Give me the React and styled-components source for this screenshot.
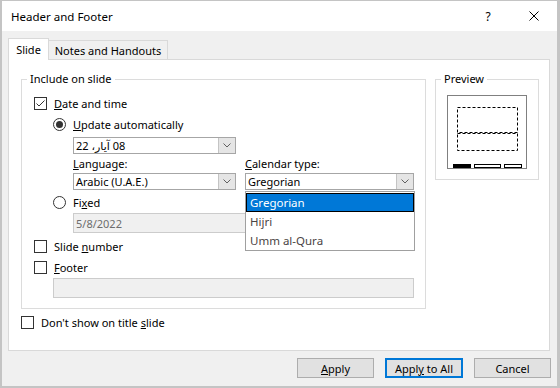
import React from "react";
import styled, { createGlobalStyle } from "styled-components";

const GlobalStyle = createGlobalStyle`
  html, body {
    margin: 0;
    padding: 0;
    background: #fff;
  }
  body {
    font-family: "Noto Sans", "DejaVu Sans", sans-serif;
    font-size: 11px;
    color: #000;
  }
`;

const Window = styled.div`
  width: 560px;
  height: 388px;
  box-sizing: border-box;
  border-style: solid;
  border-color: #c4c4c4;
  border-width: 1px 3px 2px 2px;
  display: flex;
  flex-direction: column;
  background: #f0f0f0;
`;

const TitleBar = styled.div`
  height: 30px;
  flex: none;
  background: #fff;
  display: flex;
  align-items: center;
  padding-left: 9px;
  font-size: 11.5px;
`;

const Title = styled.div`
  flex: 1;
`;

const TitleButton = styled.div`
  width: 46px;
  height: 30px;
  display: flex;
  align-items: center;
  justify-content: center;
  font-size: 12px;
`;

const Body = styled.div`
  flex: 1;
  display: flex;
  flex-direction: column;
  padding: 7px 7px 8px 6px;
`;

const TabRow = styled.div`
  display: flex;
  align-items: flex-end;
  height: 21px;
  position: relative;
  z-index: 1;
`;

const Tab = styled.div`
  box-sizing: border-box;
  width: ${(p) => p.$width}px;
  display: flex;
  align-items: center;
  justify-content: center;
  border: 1px solid #d9d9d9;
  border-bottom: none;
  background: ${(p) => (p.$active ? "#fff" : "#f0f0f0")};
  height: ${(p) => (p.$active ? "22px" : "19px")};
  margin-bottom: ${(p) => (p.$active ? "-1px" : "0")};
  ${(p) => !p.$active && "border-left: none;"}
`;

const Panel = styled.div`
  box-sizing: border-box;
  height: 292px;
  background: #fff;
  border: 1px solid #d9d9d9;
  padding: 11px 0 0 12px;
`;

const PanelTop = styled.div`
  display: flex;
  align-items: flex-start;
  gap: 9px;
`;

const Group = styled.fieldset`
  box-sizing: border-box;
  width: ${(p) => p.$width}px;
  margin: 0;
  min-width: 0;
  border: 1px solid #dcdcdc;
  padding: 0;
`;

const GroupBody = styled.div`
  padding: ${(p) => p.$pad};
`;

const Legend = styled.legend`
  line-height: 16px;
  padding: 0 3px;
  margin-left: 5px;
`;

const Row = styled.div`
  display: flex;
  align-items: center;
  gap: 7px;
  height: ${(p) => p.$h || 20}px;
  margin-top: ${(p) => p.$mt || 0}px;
  padding-left: ${(p) => p.$indent || 0}px;
`;

const Box = styled.span`
  box-sizing: border-box;
  width: 13px;
  height: 13px;
  border: 1px solid #333;
  background: #fff;
  display: flex;
  align-items: center;
  justify-content: center;
  flex: none;
`;

const Radio = styled(Box)`
  border-radius: 50%;
`;

const Dot = styled.span`
  width: 7px;
  height: 7px;
  border-radius: 50%;
  background: #333;
`;

const Combo = styled.div`
  box-sizing: border-box;
  width: ${(p) => p.$width}px;
  height: 17px;
  border: 1px solid #a6a6a6;
  background: #fff;
  display: flex;
  align-items: stretch;
`;

const ComboText = styled.div`
  flex: 1;
  display: flex;
  align-items: center;
  padding-left: 2px;
  line-height: 15px;
  white-space: nowrap;
  overflow: hidden;
`;

const DropButton = styled.div`
  width: 16px;
  background: #e5e5e5;
  border-left: 1px solid #c4c4c4;
  display: flex;
  align-items: center;
  justify-content: center;
`;

const TextBox = styled.div`
  box-sizing: border-box;
  width: ${(p) => p.$width}px;
  height: 20px;
  border: 1px solid #cccccc;
  background: #f0f0f0;
  color: #6d6d6d;
  display: flex;
  align-items: center;
  padding-left: 2px;
`;

const Columns = styled.div`
  display: flex;
  gap: 9px;
  padding-left: 39px;
  margin-top: ${(p) => p.$mt || 0}px;
  height: ${(p) => p.$h}px;
  align-items: center;
`;

const Column = styled.div`
  width: ${(p) => p.$width}px;
  position: relative;
`;

const DropList = styled.div`
  position: absolute;
  top: calc(100% + 1px);
  left: 0;
  width: 170px;
  box-sizing: border-box;
  border: 1px solid #a0a0a0;
  background: #fff;
  padding-top: 1px;
  z-index: 2;
`;

const ListItem = styled.div`
  box-sizing: border-box;
  height: 19px;
  display: flex;
  align-items: center;
  padding-left: 3px;
  font-size: 11.5px;
  color: ${(p) => (p.$selected ? "#fff" : "#4a4444")};
  background: ${(p) => (p.$selected ? "#0078d7" : "transparent")};
  border: 1px solid ${(p) => (p.$selected ? "#000" : "transparent")};
`;

const ButtonRow = styled.div`
  display: flex;
  justify-content: flex-end;
  gap: 11px;
  margin-top: 7px;
  margin-right: -1px;
`;

const Button = styled.div`
  box-sizing: border-box;
  width: ${(p) => p.$width}px;
  height: 20px;
  display: flex;
  align-items: center;
  justify-content: center;
  background: #e1e1e1;
  border: ${(p) => (p.$default ? "2px solid #0078d7" : "1px solid #adadad")};
`;

const PreviewBox = styled.div`
  width: 80px;
  height: 74px;
`;

const Chevron = () => (
  <svg width="8" height="5" viewBox="0 0 8 5">
    <polyline points="0.5,0.5 4,4 7.5,0.5" fill="none" stroke="#606060" strokeWidth="1" />
  </svg>
);

const CheckBox = ({ checked }) => (
  <Box>
    {checked && (
      <svg width="11" height="11" viewBox="0 0 11 11">
        <polyline points="1.5,5.5 4,8 9.5,2.5" fill="none" stroke="#333" strokeWidth="1" />
      </svg>
    )}
  </Box>
);

const RadioButton = ({ checked }) => <Radio>{checked && <Dot />}</Radio>;

const PreviewDrawing = () => (
  <svg width="80" height="74" viewBox="0 0 80 74">
    <rect x="0.5" y="0.5" width="79" height="73" fill="#fff" stroke="#808080" />
    <rect x="10.5" y="12.5" width="60" height="25" fill="none" stroke="#000" strokeDasharray="3 2" />
    <rect x="10.5" y="38.5" width="60" height="17" fill="none" stroke="#000" strokeDasharray="3 2" />
    <rect x="6" y="69" width="18" height="4" fill="#000" />
    <rect x="27.5" y="69.5" width="26" height="3" fill="#fff" stroke="#000" />
    <rect x="57.5" y="69.5" width="17" height="3" fill="#fff" stroke="#000" />
  </svg>
);

export default function App() {
  return (
    <>
      <GlobalStyle />
      <Window>
        <TitleBar>
          <Title>Header and Footer</Title>
          <TitleButton>?</TitleButton>
          <TitleButton>
            <svg width="10" height="10" viewBox="0 0 10 10">
              <path d="M0.5 0.5 L9.5 9.5 M9.5 0.5 L0.5 9.5" stroke="#000" strokeWidth="1" />
            </svg>
          </TitleButton>
        </TitleBar>
        <Body>
          <TabRow>
            <Tab $active $width={41}>Slide</Tab>
            <Tab $width={119}>Notes and Handouts</Tab>
          </TabRow>
          <Panel>
            <PanelTop>
              <Group $width={405}>
                <Legend>Include on slide</Legend>
                <GroupBody $pad="0 0 10px 12px">
                  <Row $mt={6}>
                    <CheckBox checked />
                    <span><u>D</u>ate and time</span>
                  </Row>
                  <Row $mt={1} $indent={19}>
                    <RadioButton checked />
                    <span><u>U</u>pdate automatically</span>
                  </Row>
                  <Row $mt={3} $h={17} $indent={39}>
                    <Combo $width={163}>
                      <ComboText><span dir="rtl">08 آيار، 22</span></ComboText>
                      <DropButton><Chevron /></DropButton>
                    </Combo>
                  </Row>
                  <Columns $mt={1} $h={16}>
                    <Column $width={163}><u>L</u>anguage:</Column>
                    <Column $width={169}><u>C</u>alendar type:</Column>
                  </Columns>
                  <Columns $mt={2} $h={17}>
                    <Column $width={163}>
                      <Combo $width={163}>
                        <ComboText>Arabic (U.A.E.)</ComboText>
                        <DropButton><Chevron /></DropButton>
                      </Combo>
                    </Column>
                    <Column $width={169}>
                      <Combo $width={169}>
                        <ComboText>Gregorian</ComboText>
                        <DropButton><Chevron /></DropButton>
                      </Combo>
                      <DropList>
                        <ListItem $selected>Gregorian</ListItem>
                        <ListItem>Hijri</ListItem>
                        <ListItem>Umm al-Qura</ListItem>
                      </DropList>
                    </Column>
                  </Columns>
                  <Row $mt={2} $indent={19}>
                    <RadioButton />
                    <span>Fi<u>x</u>ed</span>
                  </Row>
                  <Row $mt={1} $indent={39}>
                    <TextBox $width={341}>5/8/2022</TextBox>
                  </Row>
                  <Row $mt={3}>
                    <CheckBox />
                    <span>Slide <u>n</u>umber</span>
                  </Row>
                  <Row $mt={1}>
                    <CheckBox />
                    <span><u>F</u>ooter</span>
                  </Row>
                  <Row $mt={1} $indent={19}>
                    <TextBox $width={361} />
                  </Row>
                </GroupBody>
              </Group>
              <Group $width={104}>
                <Legend>Preview</Legend>
                <GroupBody $pad="8px 0 10px 11px">
                  <PreviewBox>
                    <PreviewDrawing />
                  </PreviewBox>
                </GroupBody>
              </Group>
            </PanelTop>
            <Row $mt={3}>
              <CheckBox />
              <span>Don't show on title <u>s</u>lide</span>
            </Row>
          </Panel>
          <ButtonRow>
            <Button $width={77}><span><u>A</u>pply</span></Button>
            <Button $width={78} $default><span>Appl<u>y</u> to All</span></Button>
            <Button $width={77}>Cancel</Button>
          </ButtonRow>
        </Body>
      </Window>
    </>
  );
}
